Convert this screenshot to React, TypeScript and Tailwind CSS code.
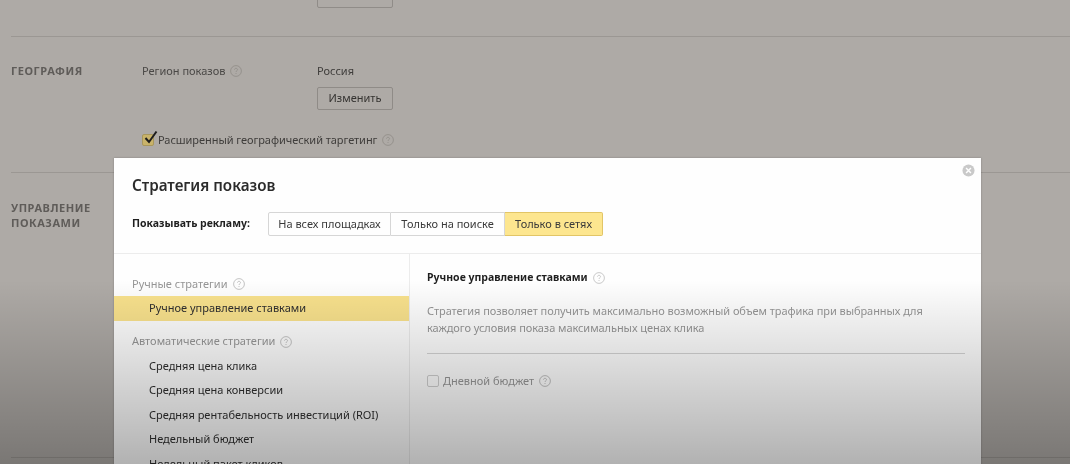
const sans = "font-['Noto_Sans','Open_Sans',sans-serif]";

function Help({ className = "" }: { className?: string }) {
  return (
    <svg viewBox="0 0 12 12" className={"inline-block h-3 w-3 shrink-0 " + className} fill="none">
      <circle cx="6" cy="6" r="5.4" stroke="currentColor" strokeWidth="0.8" />
      <path d="M4.5 4.7c0-.9.7-1.4 1.5-1.4s1.5.5 1.5 1.3c0 1.2-1.5 1.2-1.5 2.4" stroke="currentColor" strokeWidth="0.8" />
      <circle cx="6" cy="8.6" r="0.5" fill="currentColor" />
    </svg>
  );
}

function Item({ children, active = false }: { children: string; active?: boolean }) {
  return (
    <div className={"flex h-[24.5px] items-center pl-[35px] text-[11px] text-[#2f2f2f] " + (active ? "bg-[#f9e28d]" : "")}>
      {children}
    </div>
  );
}

export default function App() {
  return (
    <div className={"relative h-[464px] w-[1070px] overflow-hidden bg-[#aeaaa6] blur-[0.35px] " + sans}>
      {/* page behind the modal */}
      <div className="flex h-[36px] items-start pl-[317px]">
        <div className="-mt-[15px] h-[23px] w-[76px] rounded-[2px] border border-[#908c88]" />
      </div>
      <div className="ml-[11px] h-[137px] border-t border-b border-[#9b9793] pt-[27px]">
        <div className="flex items-start">
          <div className="w-[131px] text-[11px] leading-[14px] font-bold tracking-[0.55px] text-[#5f5c59]">ГЕОГРАФИЯ</div>
          <div className="flex w-[175px] items-center gap-[5px] text-[11px] leading-[14px] text-[#4a4846]">
            Регион показов <Help className="text-[#8f8b87]" />
          </div>
          <div>
            <div className="text-[11px] leading-[14px] text-[#3f3d3b]">Россия</div>
            <div className="mt-[9px] flex h-[23px] w-[76px] items-center justify-center rounded-[2px] border border-[#8f8b87] text-[11px] text-[#353331]">
              Изменить
            </div>
          </div>
        </div>
        <div className="mt-[23px] ml-[131px] flex items-center">
          <div className="relative h-[12px] w-[12px] rounded-[2px] border border-[#a8975c] bg-[#c9b36a]">
            <svg viewBox="0 0 16 16" className="absolute -top-[5px] -left-[0px] h-[16px] w-[16px]" fill="none">
              <path d="M2.5 8l3.5 4L13.5 1.5" stroke="#1d1d1d" strokeWidth="2" />
            </svg>
          </div>
          <span className="ml-[4px] text-[11px] leading-[14px] tracking-[-0.05px] text-[#3f3d3b]">Расширенный географический таргетинг</span>
          <Help className="ml-[5px] text-[#8f8b87]" />
        </div>
      </div>
      <div className="ml-[11px] h-[285px] border-b border-[#9b9793] pt-[27px]">
        <div className="text-[11px] leading-[15px] font-bold tracking-[0.55px] text-[#5f5c59]">
          УПРАВЛЕНИЕ
          <br />
          ПОКАЗАМИ
        </div>
      </div>

      {/* modal */}
      <div className="absolute top-[158px] left-[114px] h-[320px] w-[867px] bg-[#fefefe] shadow-[0_0_2px_rgba(0,0,0,0.25)]">
        <svg viewBox="0 0 14 14" className="absolute top-[6px] right-[6px] h-[13px] w-[13px]">
          <circle cx="7" cy="7" r="6.5" fill="#c9c9c9" />
          <path d="M4.4 4.4l5.2 5.2M9.6 4.4l-5.2 5.2" stroke="#fefefe" strokeWidth="1.6" />
        </svg>
        <div className="h-[96px] border-b border-[#ececec] pt-[17px] pl-[18px]">
          <div className="text-[15.2px] leading-[20px] font-semibold text-[#2b2b2b]">Стратегия показов</div>
          <div className="mt-[17px] flex items-center">
            <div className="w-[136px] text-[10.5px] font-bold text-[#1f1f1f]">Показывать рекламу:</div>
            <div className="flex h-[24px] text-[11px] text-[#3a3a3a]">
              <div className="flex w-[123px] items-center justify-center rounded-l-[2px] border border-[#d6d6d6]">На всех площадках</div>
              <div className="flex w-[114px] items-center justify-center border-y border-r border-[#d6d6d6]">Только на поиске</div>
              <div className="flex w-[98px] items-center justify-center rounded-r-[2px] border-y border-r border-[#e2c566] bg-[#fde68f]">Только в сетях</div>
            </div>
          </div>
        </div>
        <div className="flex h-[224px]">
          <div className="w-[296px] shrink-0 border-r border-[#ececec] pt-[18px]">
            <div className="flex h-[24px] items-center gap-[5px] pl-[18px] text-[11px] text-[#969696]">
              Ручные стратегии <Help className="text-[#b5b5b5]" />
            </div>
            <Item active>Ручное управление ставками</Item>
            <div className="mt-[9px] flex h-[24px] items-center gap-[5px] pl-[18px] text-[11px] text-[#969696]">
              Автоматические стратегии <Help className="text-[#b5b5b5]" />
            </div>
            <Item>Средняя цена клика</Item>
            <Item>Средняя цена конверсии</Item>
            <Item>Средняя рентабельность инвестиций (ROI)</Item>
            <Item>Недельный бюджет</Item>
            <Item>Недельный пакет кликов</Item>
          </div>
          <div className="flex-1 pt-[15px] pr-[16px] pl-[17px]">
            <div className="flex h-[18px] items-center gap-[5px] text-[10.5px] font-bold text-[#1f1f1f]">
              Ручное управление ставками <Help className="text-[#bdbdbd]" />
            </div>
            <div className="mt-[15px] w-[510px] text-[11px] leading-[17px] tracking-[-0.06px] text-[#969696]">
              Стратегия позволяет получить максимально возможный объем трафика при выбранных для каждого условия показа максимальных ценах клика
            </div>
            <div className="mt-[17px] border-b border-[#d4d4d4]" />
            <div className="mt-[19px] flex items-center text-[11px] text-[#969696]">
              <div className="h-[12px] w-[12px] rounded-[2px] border border-[#cfcfcf]" />
              <span className="ml-[4px]">Дневной бюджет</span>
              <Help className="ml-[5px] text-[#b0b0b0]" />
            </div>
          </div>
        </div>
      </div>

      {/* darkening at the bottom of the page */}
      <div className="pointer-events-none absolute inset-x-0 top-[280px] bottom-0 bg-gradient-to-b from-transparent to-black/30" />
    </div>
  );
}
